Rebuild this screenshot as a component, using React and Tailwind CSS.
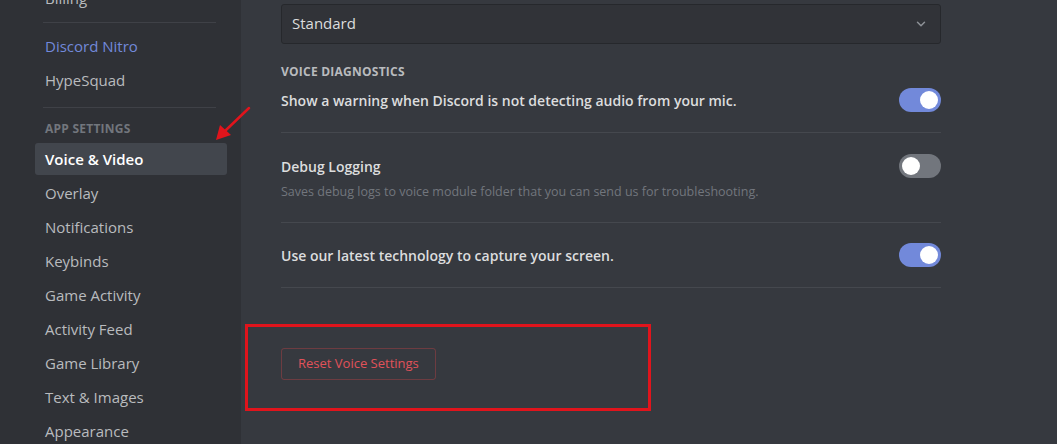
import React from "react";

const font = { fontFamily: '"Open Sans", "Noto Sans", sans-serif' };

const sideItems = ["Overlay", "Notifications", "Keybinds", "Game Activity", "Activity Feed", "Game Library", "Text & Images", "Appearance"];

function Toggle({ on }) {
  return (
    <div className={`w-[42px] h-[24px] rounded-full flex items-center px-[3px] shrink-0 ${on ? "bg-[#7289da] justify-end" : "bg-[#72767d] justify-start"}`}>
      <div className="w-[18px] h-[18px] rounded-full bg-white" />
    </div>
  );
}

export default function App() {
  return (
    <div className="w-[1057px] h-[444px] overflow-hidden flex relative bg-[#36393f]" style={font}>
      <aside className="w-[241px] shrink-0 bg-[#2f3136] pl-[35px] pr-[14px]">
        <div className="-mt-[18px]">
          <div className="h-[32px] mb-[2px] pl-[10px] flex items-center text-[15px] text-[#b9bbbe]">Billing</div>
          <div className="mt-[8px] mb-[7px] mx-[8px] mr-[11px] h-px bg-[#3f4147]" />
          <div className="h-[32px] mb-[2px] pl-[10px] flex items-center text-[15px] text-[#7289da]">Discord Nitro</div>
          <div className="h-[32px] mb-[2px] pl-[10px] flex items-center text-[15px] text-[#b9bbbe]">HypeSquad</div>
          <div className="mt-[11px] mx-[8px] mr-[11px] h-px bg-[#3f4147]" />
          <div className="pt-[13px] pb-[6px] pl-[10px] text-[12px] leading-[16px] font-bold tracking-[0.02em] text-[#72767d]">APP SETTINGS</div>
          <div className="h-[32px] mb-[2px] pl-[10px] flex items-center text-[15px] font-semibold text-white bg-[#42464d] rounded-[3px]">Voice &amp; Video</div>
          {sideItems.map((s) => (
            <div key={s} className="h-[32px] mb-[2px] pl-[10px] flex items-center text-[15px] text-[#b9bbbe]">{s}</div>
          ))}
        </div>
      </aside>

      <main className="flex-1 pl-[40px] pt-[4px]">
        <div className="w-[660px]">
          <div className="h-[40px] rounded-[3px] border border-[#26282c] bg-[#313338] flex items-center justify-between pl-[10px] pr-[12px]">
            <span className="text-[15px] text-[#dcddde] -mt-px">Standard</span>
            <svg width="14" height="14" viewBox="0 0 24 24" fill="none" stroke="#8e9297" strokeWidth="2.5" strokeLinecap="round" strokeLinejoin="round">
              <path d="M6 9l6 6 6-6" />
            </svg>
          </div>

          <div className="mt-[20px] text-[12px] leading-[16px] font-bold tracking-[0.02em] text-[#b9bbbe]">VOICE DIAGNOSTICS</div>
          <div className="mt-[8px] flex items-center justify-between">
            <span className="text-[14px] font-semibold text-[#dcddde]">Show a warning when Discord is not detecting audio from your mic.</span>
            <Toggle on />
          </div>
          <div className="mt-[20px] h-px bg-[#45484e]" />

          <div className="mt-[21px] flex items-center justify-between">
            <span className="text-[14px] font-semibold text-[#dcddde]">Debug Logging</span>
            <Toggle on={false} />
          </div>
          <div className="mt-[5px] text-[12.5px] leading-[18px] text-[#72767d]">Saves debug logs to voice module folder that you can send us for troubleshooting.</div>
          <div className="mt-[21px] h-px bg-[#45484e]" />

          <div className="mt-[20px] flex items-center justify-between">
            <span className="text-[14px] font-semibold text-[#dcddde]">Use our latest technology to capture your screen.</span>
            <Toggle on />
          </div>
          <div className="mt-[20px] h-px bg-[#45484e]" />

          <button className="mt-[60px] h-[32px] px-[16px] rounded-[3px] border border-[#f04747]/30 text-[13px] text-[#e0525a]">
            Reset Voice Settings
          </button>
        </div>
      </main>

      {/* annotation overlays */}
      <div className="absolute left-[245px] top-[324px] w-[406px] h-[87px] border-[3px] border-[#e0141c]" />
      <svg className="absolute left-[210px] top-[100px]" width="50" height="45" viewBox="0 0 50 45">
        <line x1="39" y1="8" x2="15" y2="31" stroke="#e0141c" strokeWidth="2.5" strokeLinecap="round" />
        <path d="M6 40 L10 25 L21 35 Z" fill="#e0141c" />
      </svg>
    </div>
  );
}
